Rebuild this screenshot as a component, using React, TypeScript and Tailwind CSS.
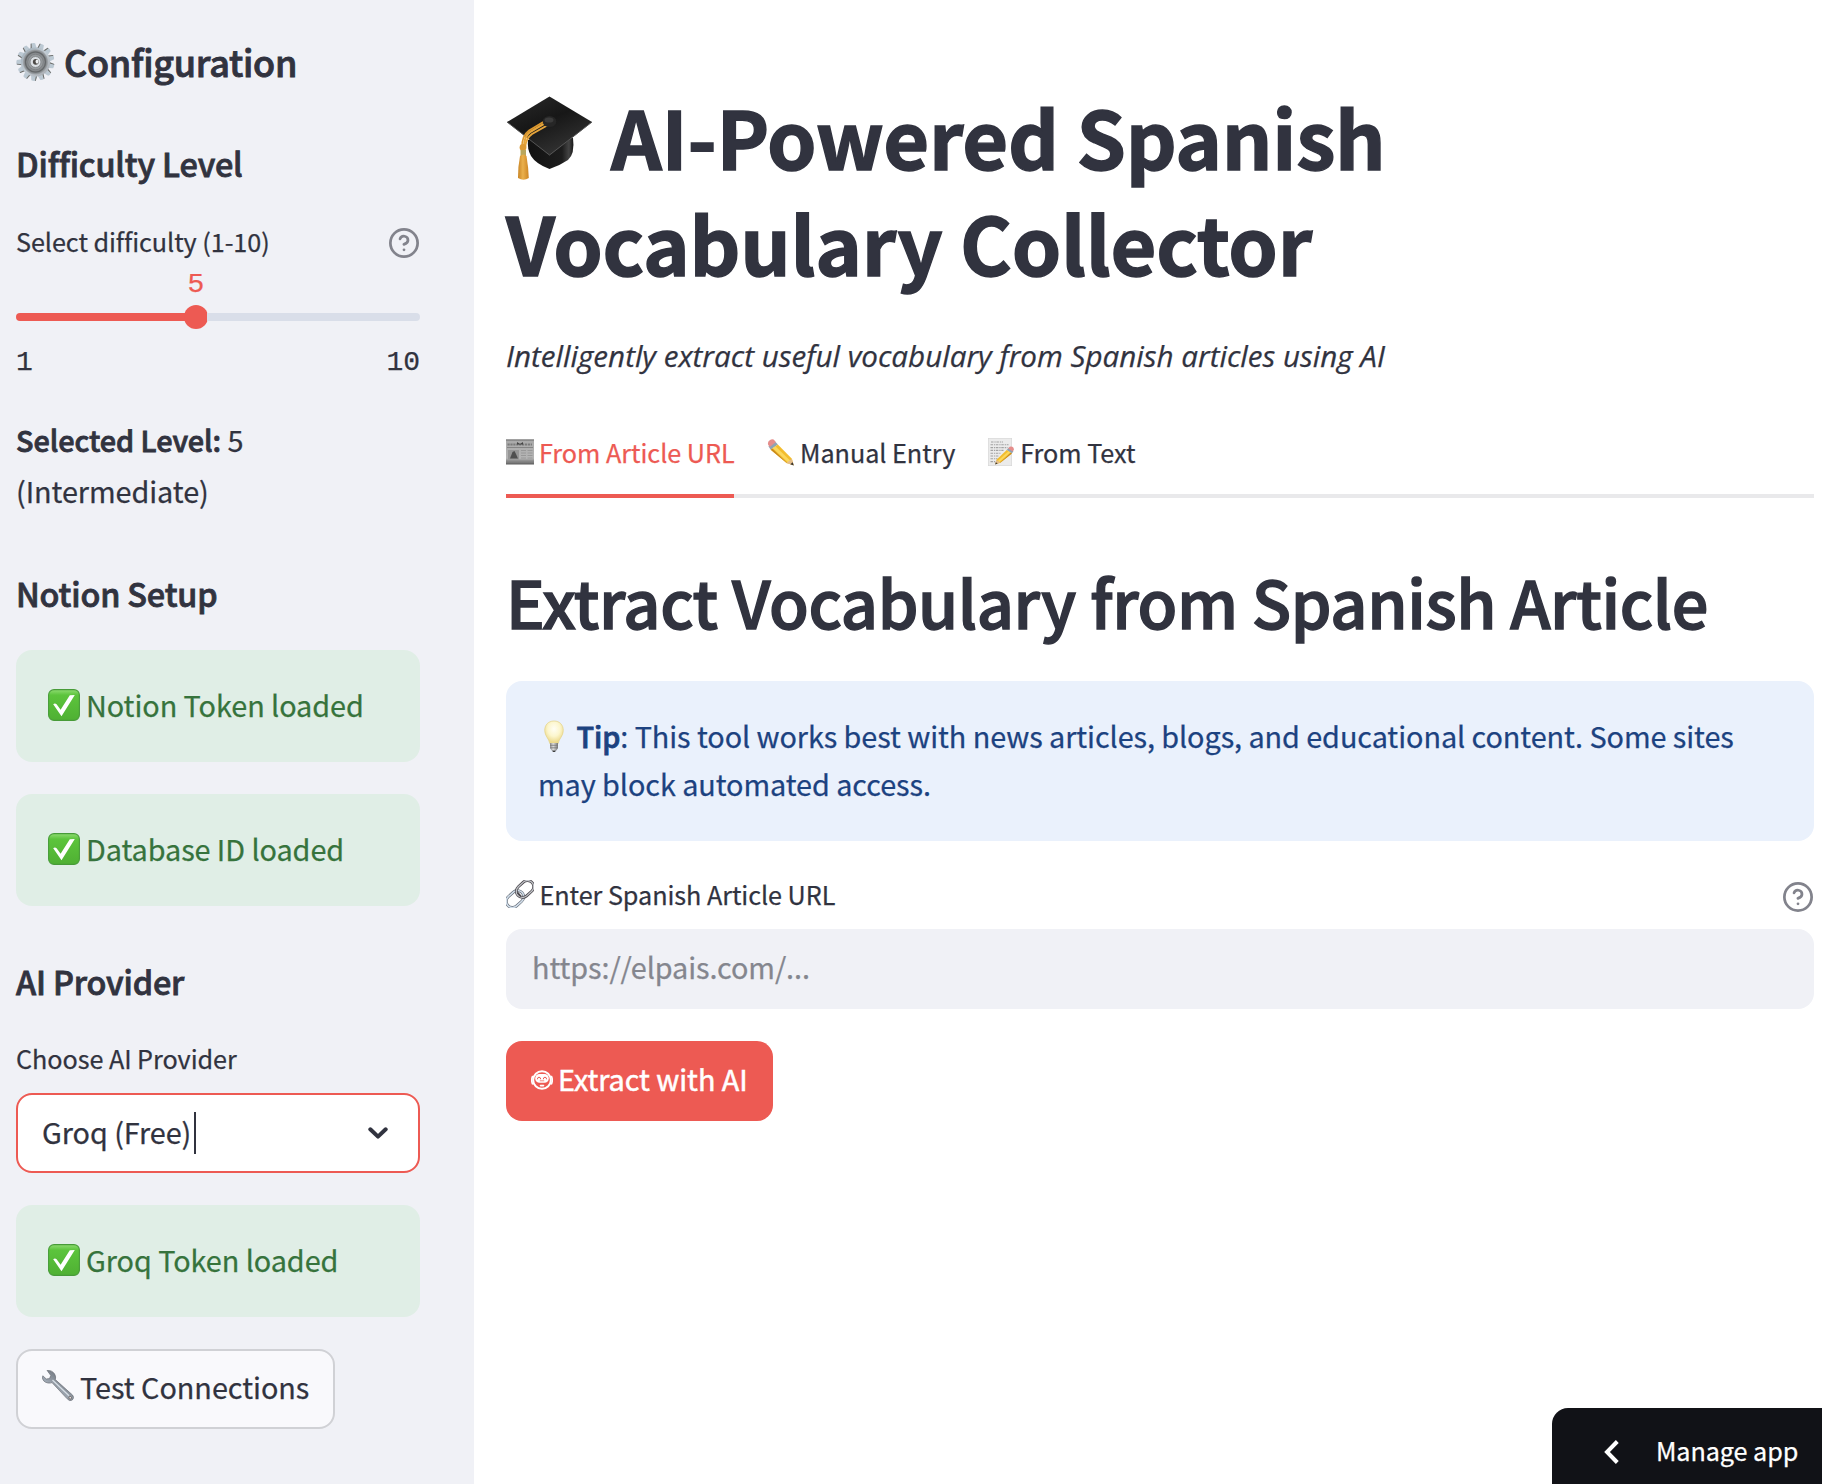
import type { ReactNode } from "react";

function GearIcon() {
  return (
    <svg className="mt-[5px] h-10 w-[39px] shrink-0" viewBox="0 0 40 40">
      <defs>
        <linearGradient id="gearRim" x1="0" y1="0" x2="1" y2="1">
          <stop offset="0" stopColor="#9aa9b4" />
          <stop offset="0.5" stopColor="#c3ccd4" />
          <stop offset="1" stopColor="#a3a6ab" />
        </linearGradient>
        <radialGradient id="gearFace">
          <stop offset="0" stopColor="#a2a6a9" />
          <stop offset="0.55" stopColor="#969a9d" />
          <stop offset="0.8" stopColor="#787b7e" />
          <stop offset="1" stopColor="#a7adb2" />
        </radialGradient>
      </defs>
      {[0, 1, 2, 3, 4, 5, 6, 7, 8, 9, 10, 11, 12].map((i) => (
        <g key={i} transform={`rotate(${i * 27.69 - 8} 20 20)`}>
          <path d="M16.8 7 L17.7 0.9 Q20 -0.1 22.3 0.9 L23.4 7 Z" fill="#bcc9d3" />
          <path d="M16.8 7 L17.7 0.9 L18.6 0.6 L18 7 Z" fill="#6b6a66" />
        </g>
      ))}
      <circle cx="20" cy="20" r="15" fill="url(#gearRim)" />
      <circle cx="20" cy="20" r="13" fill="url(#gearFace)" />
      <circle cx="20" cy="20" r="10.3" fill="none" stroke="#646769" strokeWidth="1.1" />
      <circle cx="20" cy="20" r="8" fill="none" stroke="#7d8184" strokeWidth="1" />
      <circle cx="20" cy="20" r="5.6" fill="#dde1e5" stroke="#7b7f82" strokeWidth="0.8" />
      <circle cx="20.3" cy="19.8" r="3" fill="#4d4a47" />
      <ellipse cx="21.6" cy="19.6" rx="1.5" ry="2.1" fill="#eceef0" />
    </svg>
  );
}

function GraduationIcon() {
  return (
    <svg className="mt-[13px] h-[85px] w-[87px] shrink-0" viewBox="0 0 87 85">
      <defs>
        <linearGradient id="capTop" x1="0" y1="0" x2="0.6" y2="1">
          <stop offset="0" stopColor="#2b2b2b" />
          <stop offset="0.5" stopColor="#171717" />
          <stop offset="1" stopColor="#333333" />
        </linearGradient>
        <linearGradient id="capBase" x1="0" x2="1">
          <stop offset="0" stopColor="#111111" />
          <stop offset="0.75" stopColor="#1d1d1d" />
          <stop offset="0.9" stopColor="#444444" />
          <stop offset="1" stopColor="#161616" />
        </linearGradient>
        <linearGradient id="tassel" x1="0" x2="1">
          <stop offset="0" stopColor="#c98525" />
          <stop offset="0.45" stopColor="#eab04c" />
          <stop offset="1" stopColor="#cd8422" />
        </linearGradient>
      </defs>
      <path d="M22 44 L67 42 Q69 58 62 64 Q53 70 43.500 73 Q30 68 25 60 Q21 53 22 44 Z" fill="url(#capBase)" />
      <path d="M43.500 0.500 L86 26 L43.500 59.500 L1 26 Z" fill="url(#capTop)" />
      <path d="M1 26 L43.500 59 L86 26" fill="none" stroke="#555555" strokeWidth="1" />
      <path d="M41 26 L24 36 Q18 40 18 52" fill="none" stroke="#e6a53b" strokeWidth="2.200" />
      <path d="M42 29 L26 38 Q20 42 19 52" fill="none" stroke="#e6a53b" strokeWidth="2" />
      <path d="M38 25.500 L23 34.500 Q15.500 40 16 52" fill="none" stroke="#dc982f" strokeWidth="1.600" />
      <ellipse cx="43.500" cy="25.500" rx="6.800" ry="5.500" fill="#262626" />
      <ellipse cx="43" cy="24" rx="4.500" ry="2.600" fill="#3b3b3b" />
      <circle cx="17" cy="51.500" r="3.400" fill="#dd9a34" />
      <path d="M14.500 54 h5.500 v6 h-5.500 z" fill="#b9a65c" />
      <path d="M14 60 Q17.500 57 20.500 60 Q22.500 72 22.800 82 Q17.500 85.500 12 82 Q12 70 14 60 Z" fill="url(#tassel)" />
    </svg>
  );
}

function NewspaperIcon() {
  return (
    <svg className="mt-2 h-[26px] w-7 shrink-0" viewBox="0 0 28 26">
      <defs>
        <linearGradient id="paper" x1="0" y1="0" x2="0" y2="1">
          <stop offset="0" stopColor="#a9a9a9" />
          <stop offset="0.75" stopColor="#b5b5b5" />
          <stop offset="1" stopColor="#5c5c5c" />
        </linearGradient>
      </defs>
      <rect y="0.500" width="28" height="25" fill="url(#paper)" />
      <path d="M0 1 h28" stroke="#6f6f6f" strokeWidth="1" />
      <path d="M1.500 5.500 h24.500" stroke="#7a7a7a" strokeWidth="1.800" strokeDasharray="2.200 0.700" />
      <path d="M11 3 l3 2 l3 -2 v2.500 h-6 z" fill="#444444" />
      <path d="M1 8.500 h26" stroke="#858585" strokeWidth="1" />
      <rect x="2" y="11" width="11" height="9.500" fill="#969696" />
      <path d="M4 19.500 L6.500 13 L8.500 12 L10 15 L12 19.500 Z" fill="#4f4f4f" />
      <path d="M15 11.500 h5 M21.500 11.500 h5 M15 14 h5 M21.500 14 h5 M15 16.500 h5 M21.500 16.500 h5 M15 19 h5 M21.500 19 h5" stroke="#989898" strokeWidth="1" />
      <path d="M0 22.500 h28" stroke="#858585" strokeWidth="1.500" />
    </svg>
  );
}

function PencilBody() {
  return (
    <>
      <path d="M1 7.400 L7.600 2.400 L10.800 5.600 L3.300 11.200 Z" fill="#8fa3b5" />
      <path d="M0.600 5.800 Q-0.200 2.800 2.600 1 Q5.600 -0.700 7.400 1.600 L8.600 3.400 L2.300 8.200 Z" fill="#e58d8b" />
      <path d="M3.300 11.200 L10.700 5.600 L25.300 20.400 L27 27.300 L19.800 25 Z" fill="#f3bd2d" />
      <path d="M5.500 9.600 L8.200 7.500 L23.600 22.500 L21.500 24.300 Z" fill="#fbd75c" />
      <path d="M3.300 11.200 L5 9.900 L20.800 25.300 L19.800 25 Z" fill="#c98a1c" />
      <path d="M19.800 25 L25.300 20.400 L27.200 27.500 Z" fill="#e3bd8b" />
      <path d="M23.600 26.300 L26.200 24.200 L27.200 27.600 Z" fill="#3b3630" />
    </>
  );
}

function PencilIcon() {
  return (
    <svg className="mt-2 h-[27px] w-7 shrink-0" viewBox="0 0 28 28">
      <PencilBody />
    </svg>
  );
}

function MemoIcon() {
  return (
    <svg className="mt-[7px] h-7 w-[26px] shrink-0" viewBox="0 0 26 28">
      <rect x="0.300" y="0.300" width="23.400" height="27.400" fill="#ebebeb" stroke="#d4d4d4" strokeWidth="0.600" />
      <path
        d="M3 4 h12 M2.500 6.800 h18 M2.500 9.600 h17 M2.500 12.400 h13 M2.500 15.200 h10 M2.500 18 h8 M2.500 20.800 h7 M2.500 23.600 h5"
        stroke="#a3a3a3"
        strokeWidth="1.100"
        strokeDasharray="2.500 0.900 1.300 0.700"
      />
      <g transform="translate(26.200 8.200) scale(-0.700 0.660)">
        <PencilBody />
      </g>
    </svg>
  );
}

function CheckIcon() {
  return (
    <svg className="mt-2 h-8 w-8 shrink-0" viewBox="0 0 32 32">
      <defs>
        <linearGradient id="checkFill" x1="0" y1="0" x2="0" y2="1">
          <stop offset="0" stopColor="#8fdc72" />
          <stop offset="0.180" stopColor="#5cc43c" />
          <stop offset="1" stopColor="#4fb033" />
        </linearGradient>
      </defs>
      <rect x="0.600" y="0.600" width="30.800" height="30.800" rx="5.500" fill="url(#checkFill)" stroke="#479b38" strokeWidth="1.100" />
      <path d="M5.200 15.200 Q7 14 8.600 15.300 L12.600 20.800 L21.800 6.200 L26.800 6 L13.500 27.200 Z" fill="#ffffff" />
    </svg>
  );
}

function BulbIcon() {
  return (
    <svg className="mr-[5.5px] inline-block h-[33px] w-[33px] align-[-5px]" viewBox="0 0 33 33">
      <defs>
        <radialGradient id="bulb" cx="0.500" cy="0.350" r="0.600">
          <stop offset="0" stopColor="#fffef4" />
          <stop offset="0.550" stopColor="#fcf6cd" />
          <stop offset="1" stopColor="#ecd98a" />
        </radialGradient>
        <linearGradient id="bulbBase" x1="0" x2="1">
          <stop offset="0" stopColor="#8a8a8a" />
          <stop offset="0.400" stopColor="#dddddd" />
          <stop offset="1" stopColor="#777777" />
        </linearGradient>
      </defs>
      <path d="M16 1 C22 1 25.300 5.200 25.300 10.500 C25.300 16 21 18.500 20.200 23.500 H11.800 C11 18.500 6.700 16 6.700 10.500 C6.700 5.200 10 1 16 1 Z" fill="url(#bulb)" stroke="#e4d288" strokeWidth="0.700" />
      <path d="M12 23 H20 V28 L18.500 30.500 H13.500 L12 28 Z" fill="url(#bulbBase)" />
      <path d="M12 25.300 h8 M12.200 27.800 h7.600" stroke="#777777" strokeWidth="0.800" />
      <path d="M14 30.500 h4 l-1 1.500 h-2 z" fill="#3f3f3f" />
    </svg>
  );
}

function LinkIcon() {
  return (
    <svg className="mt-[7px] h-7 w-7 shrink-0" viewBox="0 0 28 28" fill="none">
      <g transform="rotate(-42 9 19)">
        <rect x="-0.600" y="12.800" width="19.200" height="12.400" rx="6.200" stroke="#5d6570" strokeWidth="2.800" />
        <rect x="-0.600" y="12.800" width="19.200" height="12.400" rx="6.200" stroke="#d2deea" strokeWidth="1.600" />
      </g>
      <g transform="rotate(-42 19 9)">
        <rect x="9.400" y="2.800" width="19.200" height="12.400" rx="6.200" stroke="#4a474c" strokeWidth="2.800" />
        <rect x="9.400" y="2.800" width="19.200" height="12.400" rx="6.200" stroke="#c3c5ca" strokeWidth="1.300" />
      </g>
      <path d="M11.500 12.500 L15 16.500" stroke="#4a474c" strokeWidth="1.800" />
    </svg>
  );
}

function RobotIcon() {
  return (
    <svg className="mt-[15px] h-5 w-[22px] shrink-0" viewBox="0 0 22 20" fill="none">
      <circle cx="11" cy="10" r="8.800" stroke="#ffffff" strokeWidth="1.900" />
      <path d="M1.800 6 Q-0.300 10 1.800 14.500 M20.200 6 Q22.300 10 20.200 14.500" stroke="#ffffff" strokeWidth="1.700" />
      <rect x="4.200" y="4" width="13.600" height="8.800" rx="4.300" fill="#ffffff" />
      <path d="M6.400 9.300 Q6.500 7.200 8 7.200 Q9.600 7.200 9.700 9.300 M12.300 9.300 Q12.400 7.200 14 7.200 Q15.500 7.200 15.600 9.300" stroke="#ed5a53" strokeWidth="1" />
      <path d="M8.800 10.800 h4.400" stroke="#ed5a53" strokeWidth="0.700" />
      <path d="M9.500 15.600 h3" stroke="#ffffff" strokeWidth="1.600" strokeLinecap="round" />
    </svg>
  );
}

function WrenchIcon() {
  return (
    <svg className="mt-[7px] h-8 w-8 shrink-0" viewBox="0 0 32 32">
      <defs>
        <linearGradient id="wrench" x1="0" y1="1" x2="0.600" y2="0.300">
          <stop offset="0" stopColor="#5c5f66" />
          <stop offset="0.500" stopColor="#a9b3be" />
          <stop offset="1" stopColor="#7b828b" />
        </linearGradient>
      </defs>
      <path
        d="M5 0.500 L5.800 1.400 L8.800 5.500 L7.500 8.600 L4.300 9 L0.800 5.800 L0.200 6.500 Q0.600 12.200 6 13 Q8.500 13.300 10 12.600 L25.200 28.800 Q27.600 31.800 30.300 30 Q32.800 27.600 30.500 25 L13.300 9.600 Q14.300 7 12.600 4 Q10 0 5 0.500 Z"
        fill="url(#wrench)"
        stroke="#6a6e75"
        strokeWidth="0.700"
      />
      <path d="M10.500 10 L27 25.800" stroke="#d6dde4" strokeWidth="1.400" />
      <circle cx="28.200" cy="27.800" r="1.300" fill="#f0f1f4" stroke="#5f5553" strokeWidth="0.800" />
    </svg>
  );
}

function HelpIcon({ className }: { className: string }) {
  return (
    <svg className={className} viewBox="1 1 22 22" fill="none" stroke="#82838c" strokeWidth="2" strokeLinecap="round" strokeLinejoin="round">
      <circle cx="12" cy="12" r="10" />
      <path d="M9.090 9a3 3 0 0 1 5.830 1c0 2-3 3-3 3" />
      <path d="M12 17h.01" />
    </svg>
  );
}

function StatusBox({ children }: { children: ReactNode }) {
  return (
    <div className="flex h-28 items-start gap-1.5 rounded-2xl bg-[#e0eee6] px-8 pt-[31px] text-[28.8px] leading-[48px] tracking-[-0.06px] text-[#36733c]">
      <CheckIcon />
      <span>{children}</span>
    </div>
  );
}

function SectionHeading({ className, children }: { className: string; children: ReactNode }) {
  return (
    <h3 className={`${className} text-[32.4px] leading-[44px] font-medium tracking-[-0.17px] [-webkit-text-stroke:0.8px]`}>
      {children}
    </h3>
  );
}

function Sidebar() {
  return (
    <aside className="flex w-[474px] shrink-0 flex-col bg-[#f0f1f6] pr-[54px] pl-4 pt-[37px]">
      <h2 className="flex items-start gap-[9px] text-[36px] leading-[48px] font-medium tracking-[-0.29px] [-webkit-text-stroke:0.9px]">
        <GearIcon />
        Configuration
      </h2>

      <SectionHeading className="mt-14">Difficulty Level</SectionHeading>
      <div className="mt-[35px] flex justify-between text-[25.2px] leading-[42px] tracking-[-0.05px]">
        <span>Select difficulty (1-10)</span>
        <HelpIcon className="mt-2 mr-px size-[30px]" />
      </div>
      <div className="mt-[9px] w-[360px] text-center font-['Liberation_Mono'] text-[28px] leading-[28px] text-[#ed5a53]">5</div>
      <div className="mt-1.5 flex h-6 items-center">
        <div className="h-2 w-[169px] rounded-l-full bg-[#ed5a53]" />
        <div className="-ml-px size-6 rounded-full bg-[#ed5a53]" />
        <div className="-ml-px h-2 flex-1 rounded-r-full bg-[#d9dee9]" />
      </div>
      <div className="mt-[18px] flex justify-between font-['Liberation_Mono'] text-[28px] leading-[32px]">
        <span>1</span>
        <span>10</span>
      </div>
      <p className="mt-[35px] text-[28.8px] leading-[51px] tracking-[-0.06px]">
        <strong className="font-medium [-webkit-text-stroke:0.8px]">Selected Level:</strong> 5
        <br />
        (Intermediate)
      </p>

      <SectionHeading className="mt-[55px]">Notion Setup</SectionHeading>
      <div className="mt-[35px] flex flex-col gap-8">
        <StatusBox>Notion Token loaded</StatusBox>
        <StatusBox>Database ID loaded</StatusBox>
      </div>

      <SectionHeading className="mt-[53px]">AI Provider</SectionHeading>
      <label className="mt-[34px] text-[25.2px] leading-[42px] tracking-[-0.05px]">Choose AI Provider</label>
      <div className="mt-3.5 mb-8 flex h-20 items-start rounded-2xl border-2 border-[#ed5a53] bg-white pr-[30px] pl-6 pt-[13px] text-[28.8px] leading-[48px] tracking-[-0.06px]">
        <span>Groq (Free)</span>
        <span className="mt-1 ml-[3px] h-[42px] w-0.5 bg-[#31333f]" />
        <svg className="mt-[19px] ml-auto h-[13px] w-5" viewBox="0 0 20 13" fill="none">
          <path d="M2.300 2.300 L10 9.600 L17.700 2.300" stroke="#31333f" strokeWidth="4" strokeLinecap="round" strokeLinejoin="round" />
        </svg>
      </div>
      <StatusBox>Groq Token loaded</StatusBox>
      <button className="mt-8 flex h-20 w-[319px] items-start gap-1.5 rounded-2xl border-2 border-[#d0d1d5] bg-[#f9f9fc] pt-3 pl-6 text-[28.8px] leading-[48px] tracking-[-0.03px] whitespace-nowrap">
        <WrenchIcon />
        Test Connections
      </button>
    </aside>
  );
}

function Main() {
  return (
    <main className="flex flex-1 flex-col pt-[83px] pr-2 pl-8">
      <h1 className="text-[79.2px] leading-[106px] font-bold tracking-[-0.25px] [-webkit-text-stroke:1.4px]">
        <span className="flex items-start gap-[18px]">
          <GraduationIcon />
          AI-Powered Spanish
        </span>
        <span className="block">Vocabulary Collector</span>
      </h1>
      <p className="mt-[37px] font-['Open_Sans'] text-[29.6px] leading-[48px] whitespace-nowrap italic">
        Intelligently extract useful vocabulary from Spanish articles using AI
      </p>

      <nav className="mt-[51px] flex gap-[33px] border-b-4 border-[#e9e9eb] text-[25.2px] leading-[42px] tracking-[-0.03px]">
        <div className="-mb-1 flex w-[228px] items-start gap-[5px] border-b-4 border-[#ed5a53] pb-[21px] whitespace-nowrap text-[#ed5a53]">
          <NewspaperIcon />
          From Article URL
        </div>
        <div className="flex items-start gap-[5px] whitespace-nowrap">
          <PencilIcon />
          Manual Entry
        </div>
        <div className="flex items-start gap-1.5 whitespace-nowrap">
          <MemoIcon />
          From Text
        </div>
      </nav>

      <h2 className="mt-[60px] text-[64.8px] leading-[86px] font-medium tracking-[-0.4px] whitespace-nowrap [-webkit-text-stroke:1.4px]">
        Extract Vocabulary from Spanish Article
      </h2>
      <div className="mt-[37px] h-40 rounded-2xl bg-[#eaf1fc] px-8 pt-[31px] text-[28.8px] leading-[48px] tracking-[-0.065px] whitespace-nowrap text-[#1c4280]">
        <BulbIcon />
        <strong className="font-medium [-webkit-text-stroke:0.8px]">Tip</strong>: This tool works best with news articles, blogs, and educational content. Some sites
        <br />
        may block automated access.
      </div>

      <div className="mt-8 flex items-start text-[25.2px] leading-[42px] tracking-[-0.05px]">
        <LinkIcon />
        <span className="ml-[5.5px]">Enter Spanish Article URL</span>
        <HelpIcon className="mt-[9px] mr-px ml-auto size-[30px]" />
      </div>
      <div className="mt-3.5 h-20 rounded-2xl bg-[#f0f1f6] pt-3.5 pl-[26px] text-[28.8px] leading-[48px] tracking-[-0.08px] text-[#84868e]">
        https://elpais.com/...
      </div>
      <button className="mt-8 flex h-20 w-[267px] items-start gap-[5px] rounded-2xl bg-[#ed5a53] pt-3.5 pl-[25px] text-[28.8px] leading-[48px] tracking-[-0.06px] whitespace-nowrap text-white [-webkit-text-stroke:0.5px]">
        <RobotIcon />
        Extract with AI
      </button>
    </main>
  );
}

export default function App() {
  return (
    <div className="relative flex h-[1484px] w-[1822px] overflow-hidden bg-white font-['Noto_Sans_CJK_SC',sans-serif] text-[#31333f] [-webkit-text-stroke:0.25px]">
      <Sidebar />
      <Main />
      <div className="absolute right-0 bottom-0 flex h-[76px] w-[270px] items-start rounded-tl-2xl bg-[#111217] pl-[52px] text-[25.2px] leading-[42px] tracking-[-0.08px] text-white">
        <svg className="mt-8 mr-[37px] h-6 w-[15px]" viewBox="0 0 15 24" fill="none">
          <path d="M13.300 1.500 L3 12 L13.300 22.500" stroke="#ffffff" strokeWidth="4" />
        </svg>
        <span className="mt-[21px]">Manage app</span>
      </div>
    </div>
  );
}
